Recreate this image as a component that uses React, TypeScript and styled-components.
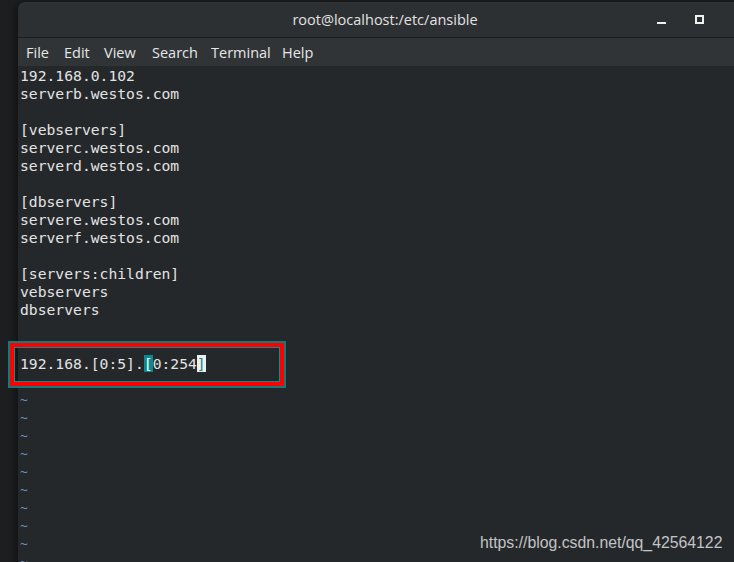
import React from "react";
import styled, { createGlobalStyle } from "styled-components";

const Global = createGlobalStyle`
  html, body { margin: 0; padding: 0; background: #1e1f20; overflow: hidden; }
  body { width: 734px; height: 562px; }
`;

const Page = styled.div`
  position: relative;
  width: 734px;
  height: 562px;
  overflow: hidden;
  background: #1d1e1f;
  padding: 2px 0 0 18px;
  box-sizing: border-box;
`;

const Window = styled.div`
  width: 734px;
  height: 600px;
  display: flex;
  flex-direction: column;
  border-top-left-radius: 7px;
  overflow: hidden;
  background: #25282b;
  box-shadow: -3px 0 6px rgba(0, 0, 0, 0.35);
`;

const TitleBar = styled.div`
  height: 35px;
  flex: none;
  background: #2d3033;
  border-bottom: 1px solid #1a1c1d;
  display: flex;
  align-items: center;
  justify-content: center;
  position: relative;
  font-family: "Open Sans", "Noto Sans", sans-serif;
  font-size: 14.5px;
  color: #e2e2e2;
`;

const Controls = styled.div`
  position: absolute;
  right: 9px;
  top: 0;
  height: 35px;
  display: flex;
  align-items: center;
  gap: 29px;
`;

const MinBtn = styled.div`
  width: 9px;
  height: 2px;
  background: #f0f0f0;
  margin-top: 7px;
`;

const MaxBtn = styled.div`
  width: 5px;
  height: 5px;
  border: 2px solid #f0f0f0;
`;

const CloseBtn = styled.div`
  width: 10px;
  color: #f0f0f0;
  font-size: 13px;
  font-weight: bold;
  font-family: "DejaVu Sans", sans-serif;
`;

const MenuBar = styled.div`
  height: 28px;
  flex: none;
  background: #303437;
  display: flex;
  align-items: center;
  padding-left: 8px;
  font-family: "Open Sans", "Noto Sans", sans-serif;
  font-size: 14.5px;
  color: #e6e6e6;
`;

const MenuItem = styled.span<{ $w: number }>`
  width: ${(p) => p.$w}px;
  flex: none;
`;

const Body = styled.div`
  padding: 1px 0 0 2px;
  display: flex;
  flex-direction: column;
  font-family: "DejaVu Sans Mono", "Liberation Mono", monospace;
  font-size: 14.7px;
  color: #e3e3e3;
`;

const Line = styled.div`
  height: 18px;
  line-height: 18px;
  white-space: pre;
`;

const Tilde = styled.div`
  height: 18px;
  line-height: 18px;
  color: #6d8fc7;
  font-size: 13px;
`;

const Match = styled.span`
  background: #0a8a8c;
  color: #ffffff;
`;

const Cursor = styled.span`
  background: #eeeeee;
  color: #0a8a8c;
`;

const Annotation = styled.div`
  position: absolute;
  left: 8px;
  top: 341px;
  width: 278px;
  height: 47px;
  box-sizing: border-box;
  border: 2px solid #14797b;
  pointer-events: none;
`;

const AnnotationRed = styled.div`
  width: 100%;
  height: 100%;
  box-sizing: border-box;
  border: 4px solid #ff0000;
`;

const AnnotationInner = styled.div`
  width: 100%;
  height: 100%;
  box-sizing: border-box;
  border: 1px solid #17898b;
`;

const Watermark = styled.div`
  position: absolute;
  left: 480px;
  top: 534px;
  font-family: "Liberation Sans", Arial, sans-serif;
  font-size: 15.8px;
  color: rgba(225, 225, 225, 0.85);
  white-space: nowrap;
`;

const lines = [
  "192.168.0.102",
  "serverb.westos.com",
  "",
  "[vebservers]",
  "serverc.westos.com",
  "serverd.westos.com",
  "",
  "[dbservers]",
  "servere.westos.com",
  "serverf.westos.com",
  "",
  "[servers:children]",
  "vebservers",
  "dbservers",
  "",
  "",
];

const menus: [string, number][] = [
  ["File", 38],
  ["Edit", 40],
  ["View", 48],
  ["Search", 59],
  ["Terminal", 71],
  ["Help", 40],
];

export default function App() {
  return (
    <>
      <Global />
      <Page>
        <Window>
          <TitleBar>
            root@localhost:/etc/ansible
            <Controls>
              <MinBtn />
              <MaxBtn />
              <CloseBtn>×</CloseBtn>
            </Controls>
          </TitleBar>
          <MenuBar>
            {menus.map(([m, w]) => (
              <MenuItem key={m} $w={w}>
                {m}
              </MenuItem>
            ))}
          </MenuBar>
          <Body>
            {lines.map((l, i) => (
              <Line key={i}>{l || " "}</Line>
            ))}
            <Line>
              192.168.[0:5].<Match>[</Match>0:254<Cursor>]</Cursor>
            </Line>
            {Array.from({ length: 11 }).map((_, i) => (
              <Tilde key={i}>~</Tilde>
            ))}
          </Body>
        </Window>
        <Annotation>
          <AnnotationRed>
            <AnnotationInner />
          </AnnotationRed>
        </Annotation>
        <Watermark>https://blog.csdn.net/qq_42564122</Watermark>
      </Page>
    </>
  );
}
